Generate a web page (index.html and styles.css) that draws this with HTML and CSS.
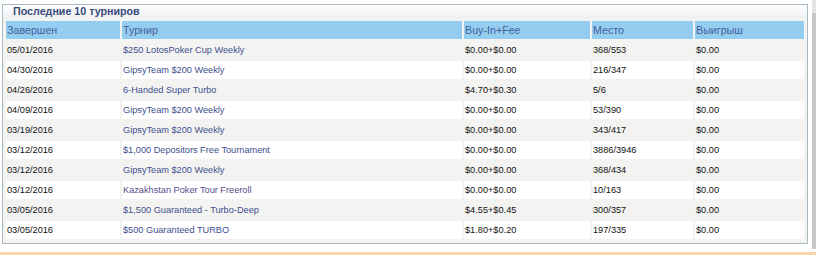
FILE: index.html
```html
<!DOCTYPE html>
<html lang="ru">
<head>
<meta charset="utf-8">
<title>Последние 10 турниров</title>
<link rel="stylesheet" href="styles.css">
</head>
<body>
<div class="page">
  <div class="main">
    <div class="panel">
      <div class="panel-title">Последние 10 турниров</div>
      <table class="results">
        <colgroup>
          <col class="c1"><col class="c2"><col class="c3"><col class="c4"><col class="c5">
        </colgroup>
        <thead>
          <tr><th>Завершен</th><th>Турнир</th><th>Buy-In+Fee</th><th>Место</th><th>Выигрыш</th></tr>
        </thead>
        <tbody>
          <tr><td>05/01/2016</td><td><a href="#">$250 LotosPoker Cup Weekly</a></td><td>$0.00+$0.00</td><td>368/553</td><td>$0.00</td></tr>
          <tr><td>04/30/2016</td><td><a href="#">GipsyTeam $200 Weekly</a></td><td>$0.00+$0.00</td><td>216/347</td><td>$0.00</td></tr>
          <tr><td>04/26/2016</td><td><a href="#">6-Handed Super Turbo</a></td><td>$4.70+$0.30</td><td>5/6</td><td>$0.00</td></tr>
          <tr><td>04/09/2016</td><td><a href="#">GipsyTeam $200 Weekly</a></td><td>$0.00+$0.00</td><td>53/390</td><td>$0.00</td></tr>
          <tr><td>03/19/2016</td><td><a href="#">GipsyTeam $200 Weekly</a></td><td>$0.00+$0.00</td><td>343/417</td><td>$0.00</td></tr>
          <tr><td>03/12/2016</td><td><a href="#">$1,000 Depositors Free Tournament</a></td><td>$0.00+$0.00</td><td>3886/3946</td><td>$0.00</td></tr>
          <tr><td>03/12/2016</td><td><a href="#">GipsyTeam $200 Weekly</a></td><td>$0.00+$0.00</td><td>368/434</td><td>$0.00</td></tr>
          <tr><td>03/12/2016</td><td><a href="#" class="visited">Kazakhstan Poker Tour Freeroll</a></td><td>$0.00+$0.00</td><td>10/163</td><td>$0.00</td></tr>
          <tr><td>03/05/2016</td><td><a href="#">$1,500 Guaranteed - Turbo-Deep</a></td><td>$4.55+$0.45</td><td>300/357</td><td>$0.00</td></tr>
          <tr><td>03/05/2016</td><td><a href="#">$500 Guaranteed TURBO</a></td><td>$1.80+$0.20</td><td>197/335</td><td>$0.00</td></tr>
        </tbody>
      </table>
    </div>
  </div>
  <div class="scroll"></div>
</div>
<div class="strip"></div>
</body>
</html>
```
FILE: styles.css
```css
html, body {
  margin: 0;
  padding: 0;
  background: #ffffff;
  font-family: "Liberation Sans", Arial, sans-serif;
}

.page {
  display: flex;
  height: 249px;
}

.main {
  width: 812px;
  padding: 4px 0 0 2px;
  box-sizing: border-box;
}

.scroll {
  width: 4px;
  height: 249px;
  background: linear-gradient(#e4e4e4 0, #e4e4e4 13px, #c6c6c6 13px, #c6c6c6 100%);
}

.strip {
  height: 3px;
  margin-top: 3px;
  background: #fdd3ae;
}

.panel {
  width: 806px;
  box-sizing: border-box;
  border: 1px solid #a9b9c4;
  background: #f3f3f2;
  padding: 0 1px 2px 1px;
}

.panel-title {
  height: 13px;
  margin: 0 -1px 1px -1px;
  padding-left: 10px;
  font-size: 10.7px;
  font-weight: bold;
  line-height: 13px;
  color: #37497a;
  background: linear-gradient(#ffffff, #eef0f2);
}

.results {
  width: 802px;
  border-collapse: separate;
  border-spacing: 2px;
  table-layout: fixed;
}

.c1 { width: 114px; }
.c2 { width: 340px; }
.c3 { width: 126px; }
.c4 { width: 101px; }
.c5 { width: 109px; }

.results th {
  height: 18px;
  padding: 0 1px;
  text-align: left;
  font-weight: normal;
  font-size: 10.7px;
  color: #41609e;
  background: #95cdf0;
  vertical-align: middle;
}

.results td {
  height: 18px;
  padding: 0 1px;
  font-size: 9.2px;
  color: #111111;
  vertical-align: middle;
  white-space: nowrap;
}

.results tbody tr:nth-child(odd) td {
  background: #f3f3f2;
}

.results tbody tr:nth-child(even) td {
  background: #ffffff;
}

.results a {
  color: #3c4f8d;
  text-decoration: none;
}

.results a.visited {
  color: #554d8c;
}
```
